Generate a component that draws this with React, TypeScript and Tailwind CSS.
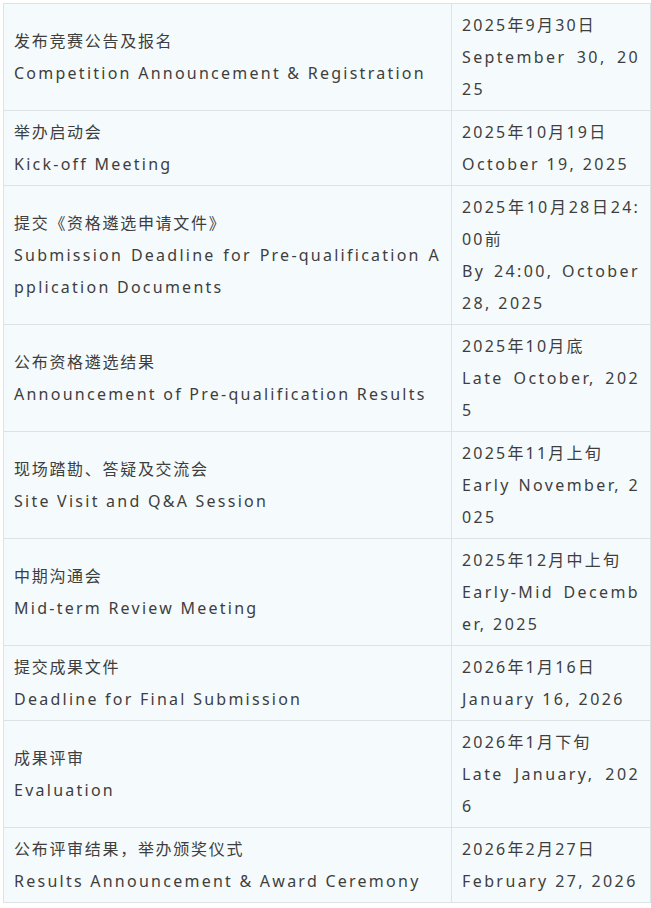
const rows = [
  {
    zh: '发布竞赛公告及报名',
    en: 'Competition Announcement & Registration',
    dateZh: '2025年9月30日',
    dateEn: 'September 30, 2025',
  },
  {
    zh: '举办启动会',
    en: 'Kick-off Meeting',
    dateZh: '2025年10月19日',
    dateEn: 'October 19, 2025',
  },
  {
    zh: '提交《资格遴选申请文件》',
    en: 'Submission Deadline for Pre-qualification Application Documents',
    dateZh: '2025年10月28日24:00前',
    dateEn: 'By 24:00, October 28, 2025',
  },
  {
    zh: '公布资格遴选结果',
    en: 'Announcement of Pre-qualification Results',
    dateZh: '2025年10月底',
    dateEn: 'Late October, 2025',
  },
  {
    zh: '现场踏勘、答疑及交流会',
    en: 'Site Visit and Q&A Session',
    dateZh: '2025年11月上旬',
    dateEn: 'Early November, 2025',
  },
  {
    zh: '中期沟通会',
    en: 'Mid-term Review Meeting',
    dateZh: '2025年12月中上旬',
    dateEn: 'Early-Mid December, 2025',
  },
  {
    zh: '提交成果文件',
    en: 'Deadline for Final Submission',
    dateZh: '2026年1月16日',
    dateEn: 'January 16, 2026',
  },
  {
    zh: '成果评审',
    en: 'Evaluation',
    dateZh: '2026年1月下旬',
    dateEn: 'Late January, 2026',
  },
  {
    zh: '公布评审结果，举办颁奖仪式',
    en: 'Results Announcement & Award Ceremony',
    dateZh: '2026年2月27日',
    dateEn: 'February 27, 2026',
  },
]

export default function App() {
  return (
    <div className="min-h-[908px] w-[651px] bg-white pl-[3px] pt-[3px] font-['Noto_Sans','Noto_Sans_CJK_SC',sans-serif] text-[16px] leading-[32px] text-[#3e3e3e]">
      <table className="w-[647px] table-fixed border-collapse bg-[#f5fbfc]">
        <colgroup>
          <col className="w-[448px]" />
          <col className="w-[199px]" />
        </colgroup>
        <tbody>
          {rows.map((r) => (
            <tr key={r.zh}>
              <td className="border border-[#dde3e4] px-[10px] py-[5px] align-middle break-all text-justify">
                <span className="tracking-[1.7px]">{r.zh}</span>
                <br />
                <span className="tracking-[2.25px]">{r.en}</span>
              </td>
              <td className="border border-[#dde3e4] px-[10px] py-[5px] align-middle break-all text-justify">
                <span className="tracking-[2.2px]">{r.dateZh}</span>
                <br />
                <span className="tracking-[2.4px]">{r.dateEn}</span>
              </td>
            </tr>
          ))}
        </tbody>
      </table>
    </div>
  )
}
